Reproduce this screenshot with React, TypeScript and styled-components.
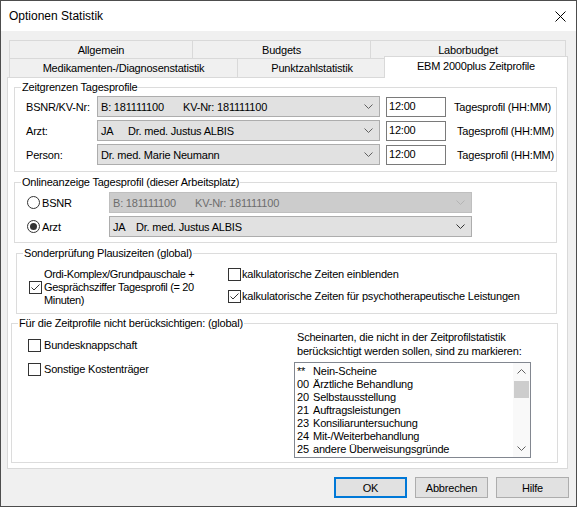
import React from 'react';
import styled, { createGlobalStyle } from 'styled-components';

const GlobalStyle = createGlobalStyle`
  html, body { margin: 0; padding: 0; background: #ffffff; }
  body {
    font-family: "Liberation Sans", Arial, sans-serif;
    font-size: 11px;
    letter-spacing: -0.2px;
    color: #000;
  }
  * { box-sizing: border-box; }
`;

const Window = styled.div`
  width: 577px;
  height: 507px;
  border: 1px solid #4d4d4d;
  background: #f0f0f0;
  display: flex;
  flex-direction: column;
  overflow: hidden;
`;

const TitleBar = styled.div`
  flex: none;
  height: 30px;
  background: #ffffff;
  display: flex;
  align-items: center;
  justify-content: space-between;
  padding: 0 10px 0 8px;
`;

const Title = styled.span`
  font-size: 12px;
  letter-spacing: 0px;
`;

const Body = styled.div`
  flex: 1;
  display: flex;
  flex-direction: column;
  padding: 9px 0 0 6px;
`;

const TabStrip = styled.div`
  margin: 0 10px 0 2px;
  display: flex;
  flex-direction: column;
`;

const TabRow = styled.div<{ $h: number }>`
  display: flex;
  align-items: flex-start;
  height: ${(p) => p.$h}px;
`;

const Tab = styled.div<{ $w: number; $last?: boolean; $h: number }>`
  flex: none;
  width: ${(p) => p.$w}px;
  height: ${(p) => p.$h}px;
  border-top: 1px solid #d9d9d9;
  border-left: 1px solid #d9d9d9;
  border-right: ${(p) => (p.$last ? '1px solid #d9d9d9' : 'none')};
  background: #f0f0f0;
  display: flex;
  align-items: center;
  justify-content: center;
`;

const ActiveTab = styled.div<{ $w: number }>`
  flex: none;
  position: relative;
  z-index: 1;
  width: ${(p) => p.$w}px;
  height: 22px;
  margin: -2px 0 0 -2px;
  border: 1px solid #d9d9d9;
  border-bottom: none;
  background: #ffffff;
  display: flex;
  justify-content: center;
  padding-top: 3px;
`;

const Pane = styled.div`
  width: 561px;
  height: 392px;
  border: 1px solid #d9d9d9;
  background: #ffffff;
  padding: 3px 10px 5px 6px;
  display: flex;
  flex-direction: column;
`;

const Group = styled.fieldset<{ $mt?: number; $ml?: number; $mr?: number }>`
  margin: ${(p) => p.$mt ?? 0}px ${(p) => p.$mr ?? 0}px 0 ${(p) => p.$ml ?? 0}px;
  padding: 0;
  min-width: 0;
  border: 1px solid #dcdcdc;
`;

const Legend = styled.legend`
  margin-left: 6px;
  padding: 0 1px;
  line-height: 13px;
  height: 13px;
`;

const GroupInner = styled.div<{ $p: string }>`
  padding: ${(p) => p.$p};
`;

const Rows = styled.div`
  display: flex;
  flex-direction: column;
  gap: 3px;
`;

const Row = styled.div`
  display: flex;
  align-items: center;
  height: 21px;
`;

const FieldLabel = styled.span<{ $w: number }>`
  flex: none;
  width: ${(p) => p.$w}px;
`;

const Combo = styled.div<{ $w: number; $disabled?: boolean }>`
  flex: none;
  width: ${(p) => p.$w}px;
  height: 21px;
  border: 1px solid ${(p) => (p.$disabled ? '#bfbfbf' : '#adadad')};
  background: ${(p) => (p.$disabled ? '#cccccc' : '#e1e1e1')};
  color: ${(p) => (p.$disabled ? '#6d6d6d' : '#000')};
  display: flex;
  align-items: center;
  padding: 0 6px 0 3px;
`;

const ComboText = styled.div`
  flex: 1;
  display: flex;
  white-space: nowrap;
`;

const Part = styled.span<{ $w?: number }>`
  flex: none;
  width: ${(p) => (p.$w ? `${p.$w}px` : 'auto')};
`;

const TimeInput = styled.div`
  flex: none;
  width: 60px;
  height: 20px;
  margin-left: 6px;
  border: 1px solid #7a7a7a;
  background: #ffffff;
  padding: 2px 0 0 2px;
`;

const Hint = styled.span<{ $ml: number }>`
  margin-left: ${(p) => p.$ml}px;
  white-space: nowrap;
`;

const RadioLabel = styled.label`
  flex: none;
  width: 82px;
  display: flex;
  align-items: center;
  gap: 2px;
`;

const RadioCircle = styled.span<{ $on?: boolean }>`
  width: 13px;
  height: 13px;
  border-radius: 50%;
  border: 1px solid #333333;
  background: #ffffff;
  display: flex;
  align-items: center;
  justify-content: center;
  &::after {
    content: '';
    width: 7px;
    height: 7px;
    border-radius: 50%;
    background: ${(p) => (p.$on ? '#333333' : 'transparent')};
  }
`;

const Box = styled.span`
  flex: none;
  width: 13px;
  height: 13px;
  border: 1px solid #333333;
  background: #ffffff;
  display: flex;
  align-items: center;
  justify-content: center;
`;

const CheckRow = styled.label<{ $gap: number }>`
  display: flex;
  align-items: center;
  gap: ${(p) => p.$gap}px;
  line-height: 13px;
  white-space: nowrap;
`;

const CheckText = styled.span`
  line-height: 13px;
  letter-spacing: -0.35px;
`;

const SplitInner = styled.div<{ $p: string }>`
  display: flex;
  padding: ${(p) => p.$p};
`;

const LeftCol = styled.div<{ $w: number; $pt?: number; $gap?: number }>`
  flex: none;
  width: ${(p) => p.$w}px;
  padding-top: ${(p) => p.$pt ?? 0}px;
  display: flex;
  flex-direction: column;
  gap: ${(p) => p.$gap ?? 0}px;
`;

const RightCol = styled.div<{ $gap: number }>`
  display: flex;
  flex-direction: column;
  gap: ${(p) => p.$gap}px;
`;

const Note = styled.div`
  padding-left: 3px;
  line-height: 14px;
  white-space: nowrap;
`;

const ListBox = styled.div`
  width: 237px;
  height: 96px;
  border: 1px solid #828790;
  background: #ffffff;
  display: flex;
  overflow: hidden;
`;

const ListItems = styled.div`
  flex: 1;
  padding: 2px 0 0 2px;
  overflow: hidden;
`;

const ListItem = styled.div`
  display: flex;
  line-height: 13px;
  white-space: nowrap;
`;

const Code = styled.span`
  flex: none;
  width: 16px;
`;

const ScrollBar = styled.div`
  flex: none;
  width: 17px;
  background: #f9f9f9;
  display: flex;
  flex-direction: column;
`;

const ScrollButton = styled.div`
  height: 17px;
  display: flex;
  align-items: center;
  justify-content: center;
`;

const Thumb = styled.div`
  height: 17px;
  margin: 1px 1px 0 1px;
  background: #cdcdcd;
`;

const Spacer = styled.div`
  flex: 1;
`;

const ButtonRow = styled.div`
  display: flex;
  justify-content: flex-end;
  gap: 8px;
  margin-top: 8px;
  padding-right: 7px;
`;

const Button = styled.div<{ $default?: boolean }>`
  width: 73px;
  height: 21px;
  background: #e1e1e1;
  border: ${(p) => (p.$default ? '2px solid #0078d7' : '1px solid #adadad')};
  display: flex;
  align-items: center;
  justify-content: center;
`;

const Chevron = ({ up, color = '#606060' }: { up?: boolean; color?: string }) => (
  <svg width="9" height="5" viewBox="0 0 9 5">
    <polyline
      points={up ? '0.5,4.5 4.5,0.5 8.5,4.5' : '0.5,0.5 4.5,4.5 8.5,0.5'}
      fill="none"
      stroke={color}
      strokeWidth="1"
    />
  </svg>
);

const CheckMark = () => (
  <svg width="11" height="11" viewBox="0 0 11 11">
    <polyline points="1.5,5.5 4,8 9.5,2.5" fill="none" stroke="#333333" strokeWidth="1" />
  </svg>
);

const Checkbox = ({ checked }: { checked?: boolean }) => <Box>{checked && <CheckMark />}</Box>;

const CloseIcon = () => (
  <svg width="11" height="11" viewBox="0 0 11 11">
    <path d="M0.5 0.5 L10.5 10.5 M10.5 0.5 L0.5 10.5" stroke="#000" strokeWidth="1" fill="none" />
  </svg>
);

const items: [string, string][] = [
  ['**', 'Nein-Scheine'],
  ['00', 'Ärztliche Behandlung'],
  ['20', 'Selbstausstellung'],
  ['21', 'Auftragsleistungen'],
  ['23', 'Konsiliaruntersuchung'],
  ['24', 'Mit-/Weiterbehandlung'],
  ['25', 'andere Überweisungsgründe'],
];

export default function App() {
  return (
    <>
      <GlobalStyle />
      <Window>
        <TitleBar>
          <Title>Optionen Statistik</Title>
          <CloseIcon />
        </TitleBar>
        <Body>
          <TabStrip>
            <TabRow $h={18}>
              <Tab $w={183} $h={18}>Allgemein</Tab>
              <Tab $w={178} $h={18}>Budgets</Tab>
              <Tab $w={196} $h={18} $last>Laborbudget</Tab>
            </TabRow>
            <TabRow $h={19}>
              <Tab $w={228} $h={19}>Medikamenten-/Diagnosenstatistik</Tab>
              <Tab $w={149} $h={19}>Punktzahlstatistik</Tab>
              <ActiveTab $w={184}>EBM 2000plus Zeitprofile</ActiveTab>
            </TabRow>
          </TabStrip>
          <Pane>
            <Group>
              <Legend>Zeitgrenzen Tagesprofile</Legend>
              <GroupInner $p="2px 0 6px 11px">
                <Rows>
                  <Row>
                    <FieldLabel $w={71}>BSNR/KV-Nr:</FieldLabel>
                    <Combo $w={283}>
                      <ComboText>
                        <Part $w={82}>B: 181111100</Part>
                        <Part>KV-Nr: 181111100</Part>
                      </ComboText>
                      <Chevron />
                    </Combo>
                    <TimeInput>12:00</TimeInput>
                    <Hint $ml={8}>Tagesprofil (HH:MM)</Hint>
                  </Row>
                  <Row>
                    <FieldLabel $w={71}>Arzt:</FieldLabel>
                    <Combo $w={283}>
                      <ComboText>
                        <Part $w={27}>JA</Part>
                        <Part>Dr. med. Justus ALBIS</Part>
                      </ComboText>
                      <Chevron />
                    </Combo>
                    <TimeInput>12:00</TimeInput>
                    <Hint $ml={11}>Tagesprofil (HH:MM)</Hint>
                  </Row>
                  <Row>
                    <FieldLabel $w={71}>Person:</FieldLabel>
                    <Combo $w={283}>
                      <ComboText>
                        <Part>Dr. med. Marie Neumann</Part>
                      </ComboText>
                      <Chevron />
                    </Combo>
                    <TimeInput>12:00</TimeInput>
                    <Hint $ml={11}>Tagesprofil (HH:MM)</Hint>
                  </Row>
                </Rows>
              </GroupInner>
            </Group>

            <Group $mt={4}>
              <Legend>Onlineanzeige Tagesprofil (dieser Arbeitsplatz)</Legend>
              <GroupInner $p="3px 0 5px 12px">
                <Rows>
                  <Row>
                    <RadioLabel>
                      <RadioCircle />
                      BSNR
                    </RadioLabel>
                    <Combo $w={363} $disabled>
                      <ComboText>
                        <Part $w={82}>B: 181111100</Part>
                        <Part>KV-Nr: 181111100</Part>
                      </ComboText>
                      <Chevron color="#b4b4b4" />
                    </Combo>
                  </Row>
                  <Row>
                    <RadioLabel>
                      <RadioCircle $on />
                      Arzt
                    </RadioLabel>
                    <Combo $w={363}>
                      <ComboText>
                        <Part $w={23}>JA</Part>
                        <Part>Dr. med. Justus ALBIS</Part>
                      </ComboText>
                      <Chevron color="#333333" />
                    </Combo>
                  </Row>
                </Rows>
              </GroupInner>
            </Group>

            <Group $mt={4} $ml={2}>
              <Legend>Sonderprüfung Plausizeiten (global)</Legend>
              <SplitInner $p="8px 0 6px 12px">
                <LeftCol $w={199}>
                  <CheckRow $gap={2}>
                    <Checkbox checked />
                    <CheckText>
                      Ordi-Komplex/Grundpauschale +
                      <br />
                      Gesprächsziffer Tagesprofil (= 20
                      <br />
                      Minuten)
                    </CheckText>
                  </CheckRow>
                </LeftCol>
                <RightCol $gap={9}>
                  <CheckRow $gap={1}>
                    <Checkbox />
                    kalkulatorische Zeiten einblenden
                  </CheckRow>
                  <CheckRow $gap={1}>
                    <Checkbox checked />
                    kalkulatorische Zeiten für psychotherapeutische Leistungen
                  </CheckRow>
                </RightCol>
              </SplitInner>
            </Group>

            <Group $mt={3} $ml={-3} $mr={-1}>
              <Legend>Für die Zeitprofile nicht berücksichtigen: (global)</Legend>
              <SplitInner $p="0 0 4px 16px">
                <LeftCol $w={266} $pt={9} $gap={11}>
                  <CheckRow $gap={3}>
                    <Checkbox />
                    Bundesknappschaft
                  </CheckRow>
                  <CheckRow $gap={3}>
                    <Checkbox />
                    Sonstige Kostenträger
                  </CheckRow>
                </LeftCol>
                <RightCol $gap={4}>
                  <Note>
                    Scheinarten, die nicht in der Zeitprofilstatistik
                    <br />
                    berücksichtigt werden sollen, sind zu markieren:
                  </Note>
                  <ListBox>
                    <ListItems>
                      {items.map(([code, label]) => (
                        <ListItem key={code}>
                          <Code>{code}</Code>
                          {label}
                        </ListItem>
                      ))}
                    </ListItems>
                    <ScrollBar>
                      <ScrollButton>
                        <Chevron up />
                      </ScrollButton>
                      <Thumb />
                      <Spacer />
                      <ScrollButton>
                        <Chevron />
                      </ScrollButton>
                    </ScrollBar>
                  </ListBox>
                </RightCol>
              </SplitInner>
            </Group>
          </Pane>
          <ButtonRow>
            <Button $default>OK</Button>
            <Button>Abbrechen</Button>
            <Button>Hilfe</Button>
          </ButtonRow>
        </Body>
      </Window>
    </>
  );
}
